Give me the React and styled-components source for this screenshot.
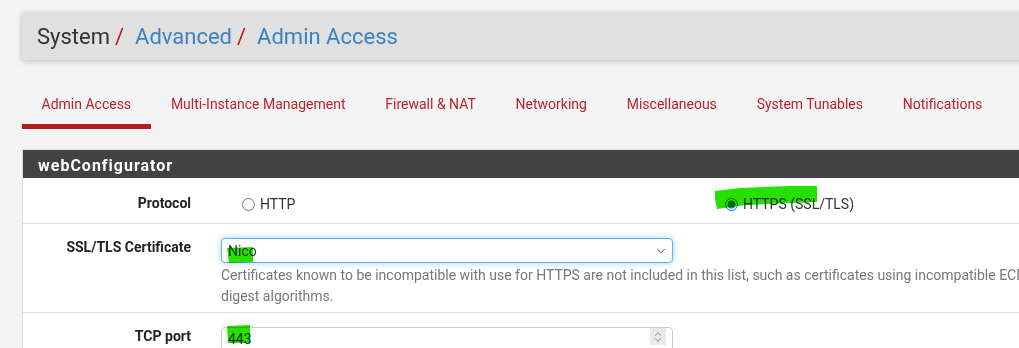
import React from "react";
import styled, { createGlobalStyle } from "styled-components";
import { ChevronDown, ChevronUp } from "lucide-react";

const GlobalStyle = createGlobalStyle`
  body {
    margin: 0;
    background: #f4f4f4;
    font-family: Roboto, "Liberation Sans", sans-serif;
    overflow: hidden;
  }
`;

const Page = styled.div`
  width: 1300px;
  padding: 13px 0 0 22px;
`;

const Crumbs = styled.div`
  height: 47px;
  background: #e0e0e0;
  box-shadow: 0 1px 6px rgba(0, 0, 0, 0.25);
  display: flex;
  align-items: center;
  padding-left: 15px;
  font-size: 22px;
  color: #333;
`;

const Slash = styled.span`
  color: #c0171b;
  margin: 0 11px 0 5px;
`;

const CrumbLink = styled.span`
  color: #3b82c4;
`;

const Tabs = styled.div`
  display: flex;
  margin-top: 20px;
`;

const Tab = styled.div`
  box-sizing: border-box;
  height: 49px;
  padding: 14px 20.3px 0 19.5px;
  font-size: 14px;
  line-height: 20px;
  color: #b9232b;
  border-bottom: 5px solid ${(p) => (p.$active ? "#b71c1c" : "transparent")};
  white-space: nowrap;
`;

const Panel = styled.div`
  margin-top: 20px;
  border-top: 1px solid #ddd;
  border-left: 1px solid #ddd;
  background: #fff;
`;

const PanelHead = styled.div`
  height: 26px;
  padding-top: 2px;
  background: #424242;
  color: #fff;
  font-size: 16px;
  font-weight: 700;
  letter-spacing: 1px;
  line-height: 28px;
  padding-left: 15px;
`;

const Row = styled.div`
  display: grid;
  grid-template-columns: 183px 1fr;
  padding: ${(p) => p.$pad || "14px 0 5px"};
  border-bottom: 1px solid #ddd;
`;

const Label = styled.div`
  text-align: right;
  padding-right: 15px;
  font-size: 14px;
  font-weight: 700;
  line-height: 18px;
  color: #222;
`;

const Field = styled.div`
  padding-left: 15px;
  width: 1100px;
`;

const Radios = styled.div`
  display: grid;
  grid-template-columns: 483px 1fr;
  padding-left: 19px;
`;

const RadioOpt = styled.label`
  position: relative;
  display: flex;
  align-items: center;
  height: 20px;
  font-size: 14px;
  color: #333;
  line-height: 20px;
`;

const Radio = styled.input`
  margin: 1px 5px 0 2px;
  width: 13px;
  height: 13px;
`;

const Select = styled.div`
  position: relative;
  box-sizing: border-box;
  width: 452px;
  height: 25px;
  border: 1px solid #66afe9;
  border-radius: 4px;
  box-shadow: 0 0 6px rgba(102, 175, 233, 0.6);
  display: flex;
  align-items: center;
  justify-content: space-between;
  padding: 0 4px 0 6px;
  font-size: 14px;
  color: #333;
  background: #fff;
`;

const Help = styled.div`
  margin-top: 2px;
  font-size: 14px;
  line-height: 21px;
  color: #777;
`;

const NumberBox = styled.div`
  position: relative;
  box-sizing: border-box;
  width: 452px;
  height: 30px;
  border: 1px solid #ccc;
  border-radius: 4px;
  display: flex;
  align-items: flex-start;
  justify-content: space-between;
  padding: 0 6px;
  font-size: 14px;
  color: #333;
  line-height: 22px;
  background: #fff;
`;

const Spinner = styled.div`
  width: 16px;
  height: 17px;
  background: #e9e9ed;
  display: flex;
  flex-direction: column;
  align-items: center;
  justify-content: center;
  color: #555;
`;

/* green highlighter scribble drawn over the screenshot */
const Marker = styled.svg`
  position: absolute;
  left: ${(p) => p.$x}px;
  top: ${(p) => p.$y}px;
  pointer-events: none;
  mix-blend-mode: multiply;
  overflow: visible;
`;

const Scribble = ({ x, y, w, h, d }) => (
  <Marker $x={x} $y={y} width={w} height={h} viewBox={`0 0 ${w} ${h}`}>
    <path d={d} fill="#27e000" />
  </Marker>
);

const tabs = [
  "Admin Access",
  "Multi-Instance Management",
  "Firewall & NAT",
  "Networking",
  "Miscellaneous",
  "System Tunables",
  "Notifications",
];

export default function App() {
  return (
    <>
      <GlobalStyle />
      <Page>
        <Crumbs>
          System<Slash>/</Slash>
          <CrumbLink>Advanced</CrumbLink>
          <Slash>/</Slash>
          <CrumbLink>Admin Access</CrumbLink>
        </Crumbs>
        <Tabs>
          {tabs.map((t, i) => (
            <Tab key={t} $active={i === 0}>
              {t}
            </Tab>
          ))}
        </Tabs>
        <Panel>
          <PanelHead>webConfigurator</PanelHead>
          <Row $pad="16px 0 9px">
            <Label>Protocol</Label>
            <Field>
              <Radios>
                <RadioOpt>
                  <Radio type="radio" name="proto" />
                  HTTP
                </RadioOpt>
                <RadioOpt>
                  <Radio type="radio" name="proto" defaultChecked />
                  HTTPS (SSL/TLS)
                  <Scribble
                    x={-8}
                    y={-8}
                    w={102}
                    h={24}
                    d="M0 5 L25 2 L75 0 L102 0 L102 16 L75 17 L30 19 L2 23 L0 13 Z"
                  />
                </RadioOpt>
              </Radios>
            </Field>
          </Row>
          <Row>
            <Label>SSL/TLS Certificate</Label>
            <Field>
              <Select>
                Nico
                <ChevronDown size={14} strokeWidth={1.6} color="#444" />
                <Scribble x={5} y={8} w={26} h={16} d="M0 1 L26 0 L26 15 L2 16 Z" />
              </Select>
              <Help>
                Certificates known to be incompatible with use for HTTPS are not included in this list, such as certificates using incompatible ECDSA curves or weak
                <br />
                digest algorithms.
              </Help>
            </Field>
          </Row>
          <Row>
            <Label>TCP port</Label>
            <Field>
              <NumberBox>
                443
                <Spinner>
                  <ChevronUp size={10} strokeWidth={1.5} style={{ marginBottom: -2 }} />
                  <ChevronDown size={10} strokeWidth={1.5} style={{ marginTop: -2 }} />
                </Spinner>
                <Scribble x={5} y={-3} w={23} h={18} d="M0 1 L23 0 L23 18 L1 18 Z" />
              </NumberBox>
            </Field>
          </Row>
        </Panel>
      </Page>
    </>
  );
}
